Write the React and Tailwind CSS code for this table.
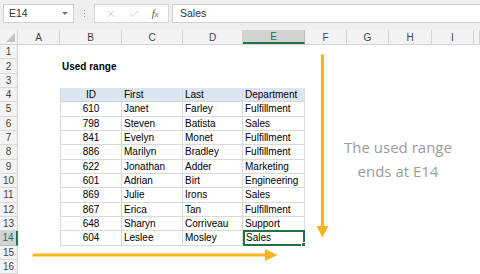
import React from "react";
import { X, Check } from "lucide-react";

const cols = [
  { id: "A", w: "w-[42px]" },
  { id: "B", w: "w-[62px]" },
  { id: "C", w: "w-[61px]" },
  { id: "D", w: "w-[60px]" },
  { id: "E", w: "w-[62px]" },
  { id: "F", w: "w-[42px]" },
  { id: "G", w: "w-[42px]" },
  { id: "H", w: "w-[43px]" },
  { id: "I", w: "w-[42px]" },
  { id: "", w: "flex-1" },
];

const people = [
  ["610", "Janet", "Farley", "Fulfillment"],
  ["798", "Steven", "Batista", "Sales"],
  ["841", "Evelyn", "Monet", "Fulfillment"],
  ["886", "Marilyn", "Bradley", "Fulfillment"],
  ["622", "Jonathan", "Adder", "Marketing"],
  ["601", "Adrian", "Birt", "Engineering"],
  ["869", "Julie", "Irons", "Sales"],
  ["867", "Erica", "Tan", "Fulfillment"],
  ["648", "Sharyn", "Corriveau", "Support"],
  ["604", "Leslee", "Mosley", "Sales"],
];

const FormulaBar = () => (
  <div className="h-[30px] bg-[#efefef] flex items-start pt-[4px] pl-[3px]">
    {/* Name box */}
    <div className="w-[71px] h-[19px] bg-white border border-[#d0d0d0] flex items-center justify-between pl-[5px] pr-[5px]">
      <span className="text-[10.5px] text-[#333]">E14</span>
      <span className="w-0 h-0 border-l-[3px] border-r-[3px] border-t-[3px] border-l-transparent border-r-transparent border-t-[#777]" />
    </div>
    {/* dotted separator */}
    <div className="w-[20px] h-[19px] flex flex-col items-center justify-center gap-[2px]">
      <span className="w-[1px] h-[1px] bg-[#9a9a9a]" />
      <span className="w-[1px] h-[1px] bg-[#9a9a9a]" />
      <span className="w-[1px] h-[1px] bg-[#9a9a9a]" />
    </div>
    {/* cancel / enter / fx */}
    <div className="w-[75px] h-[19px] bg-white border border-[#d8d8d8] flex items-center justify-around px-[4px]">
      <X size={12} strokeWidth={1.2} className="text-[#b0b0b0]" />
      <Check size={12} strokeWidth={1.2} className="text-[#b0b0b0]" />
      <span className="text-[11px] italic text-[#555] font-['Liberation_Serif',serif] leading-none">
        f<span className="text-[8px]">x</span>
      </span>
    </div>
    {/* formula input */}
    <div className="flex-1 ml-[3px] h-[19px] bg-white border border-[#d0d0d0] border-r-0 flex items-center pl-[7px]">
      <span className="text-[10.5px] text-[#333]">Sales</span>
    </div>
  </div>
);

const ColHeader = () => (
  <div className="flex h-[15px] bg-[#f3f3f3] border-b border-[#d4d4d4]">
    <div className="w-[18px] relative border-r border-[#d4d4d4]">
      <svg className="absolute right-[2px] bottom-[2px]" width="9" height="9" viewBox="0 0 9 9">
        <polygon points="9,0 9,9 0,9" fill="#c4c4c4" />
      </svg>
    </div>
    {cols.map((c, i) => (
      <div
        key={i}
        className={`${c.w} flex items-center justify-center text-[10px] border-r ${
          c.id === "E"
            ? "bg-[#d3d3d3] text-[#217346] border-[#bdbdbd] border-b-2 border-b-[#217346]"
            : "text-[#444] border-[#d4d4d4]"
        }`}
      >
        {c.id}
      </div>
    ))}
  </div>
);

const cellBase = "h-full flex items-center overflow-hidden whitespace-nowrap";

const Row = ({ n }) => {
  const isHead = n === 4;
  const inTable = n >= 4 && n <= 14;
  const data = isHead ? ["ID", "First", "Last", "Department"] : inTable ? people[n - 5] : null;
  const tb = inTable
    ? isHead
      ? "bg-[#dce6f1] border-b border-[#d4d4d4]"
      : "border-b border-[#d9d9d9]"
    : "";

  return (
    <div className="flex h-[14.33px]">
      <div
        className={`w-[18px] flex items-center justify-center text-[10px] border-b ${
          n === 14
            ? "bg-[#d3d3d3] text-[#217346] border-[#bdbdbd] border-r-2 border-r-[#217346]"
            : "bg-[#f3f3f3] text-[#444] border-[#d9d9d9] border-r border-r-[#d4d4d4]"
        }`}
      >
        {n}
      </div>
      {/* A */}
      <div className="w-[42px]" />
      {/* B */}
      <div
        className={`w-[62px] ${cellBase} ${tb} ${
          inTable ? "border-l border-l-[#d9d9d9] border-r border-r-[#d9d9d9] justify-center" : "pl-[2px]"
        }`}
      >
        {n === 2 && <span className="font-bold text-black">Used range</span>}
        {data && <span>{data[0]}</span>}
      </div>
      {/* C */}
      <div className={`w-[61px] ${cellBase} ${tb} ${inTable ? "border-r border-r-[#d9d9d9] pl-[2px]" : ""}`}>
        {data && data[1]}
      </div>
      {/* D */}
      <div className={`w-[60px] ${cellBase} ${tb} ${inTable ? "border-r border-r-[#d9d9d9] pl-[2px]" : ""}`}>
        {data && data[2]}
      </div>
      {/* E */}
      {n === 14 ? (
        <div className="w-[62px] h-[15.33px] -mt-[1px] relative border-2 border-[#217346] flex items-center pl-[1px]">
          {data[3]}
          <span className="absolute -right-[3px] -bottom-[3px] w-[5px] h-[5px] bg-[#217346] border border-white" />
        </div>
      ) : (
        <div className={`w-[62px] ${cellBase} ${tb} ${inTable ? "border-r border-r-[#d9d9d9] pl-[2px]" : ""}`}>
          {data && data[3]}
        </div>
      )}
      <div className="flex-1" />
    </div>
  );
};

const Arrows = () => (
  <svg className="absolute inset-0 pointer-events-none" width="480" height="274" viewBox="0 0 480 274">
    <line x1="322.5" y1="55.5" x2="322.5" y2="228" stroke="#f5b41f" strokeWidth="3.2" strokeLinecap="round" />
    <polygon points="316.5,226 328.5,226 322.5,237.5" fill="#f5b41f" />
    <line x1="34" y1="255" x2="266" y2="255" stroke="#f5b41f" strokeWidth="3.2" strokeLinecap="round" />
    <polygon points="265,249 265,261 277.5,255" fill="#f5b41f" />
  </svg>
);

export default function App() {
  const rows = Array.from({ length: 16 }, (_, i) => i + 1);
  return (
    <div className="w-[480px] h-[274px] overflow-hidden relative bg-white font-['Liberation_Sans',Arial,sans-serif] text-[10px] text-black">
      <FormulaBar />
      <ColHeader />
      <div className="flex flex-col">
        {rows.map((n) => (
          <Row key={n} n={n} />
        ))}
      </div>
      <Arrows />
      {/* annotation */}
      <div className="absolute left-[340px] top-[135px] w-[116px] flex flex-col items-center text-[15px] leading-[24px] text-[#9c9c9c] font-['Open_Sans',sans-serif]">
        <span>The used range</span>
        <span>ends at E14</span>
      </div>
    </div>
  );
}
